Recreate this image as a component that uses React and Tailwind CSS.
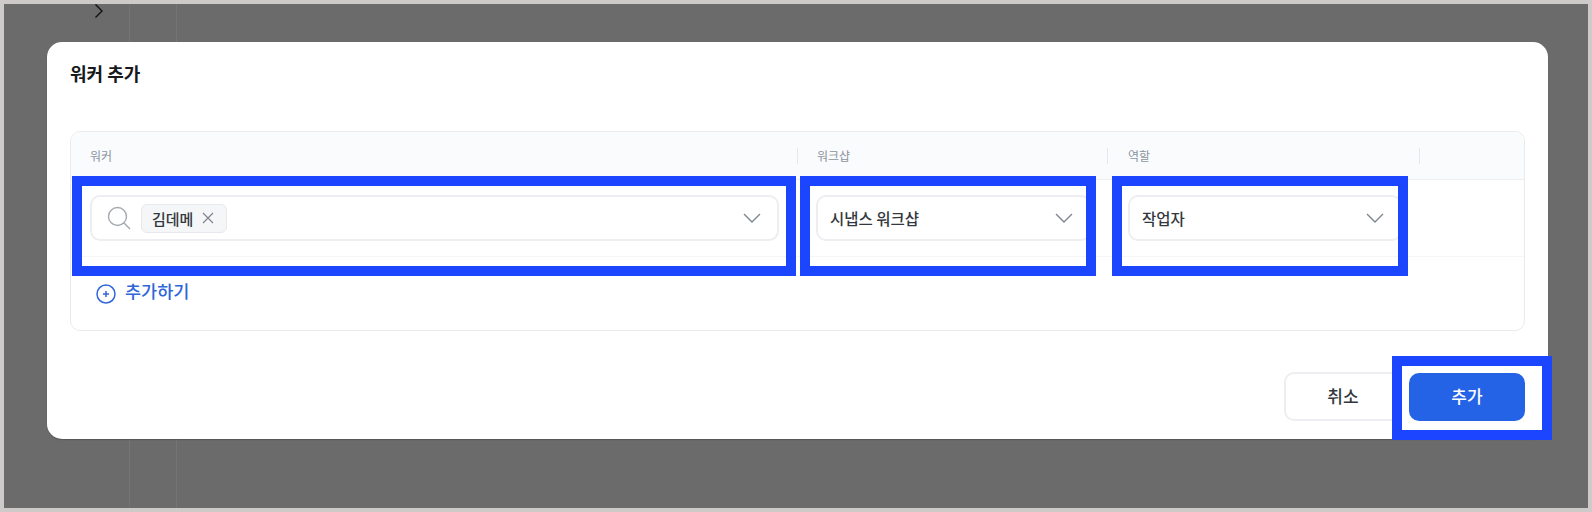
const font = { fontFamily: '"Noto Sans CJK KR", "Noto Sans", sans-serif' };

function Chevron() {
  return (
    <svg width="18" height="10" viewBox="0 0 18 10" fill="none" className="shrink-0">
      <path d="M1 1L9 9L17 1" stroke="#7e8791" strokeWidth="1.4" />
    </svg>
  );
}

function Highlight({ className }) {
  return <div className={`absolute border-[10px] border-[#1b45ff] pointer-events-none ${className}`} />;
}

function SelectBox({ label }) {
  return (
    <div className="h-[46px] flex items-center justify-between pl-3 pr-4 bg-white border-2 border-[#eceef1] rounded-[10px]">
      <span className="mt-[2px] text-[15.5px] font-medium text-[#33383e]">{label}</span>
      <Chevron />
    </div>
  );
}

function HeaderCell({ label, pad, divider = true }) {
  return (
    <div className="flex items-center">
      <div className={`h-4 w-full flex items-center text-xs text-[#8b949e] ${pad} ${divider ? 'border-r border-[#e6e9ec]' : ''}`}>
        {label}
      </div>
    </div>
  );
}

export default function App() {
  return (
    <div style={font} className="relative box-border w-[1592px] h-[512px] border-4 border-[#cfcaca] bg-[#6b6b6b] pt-[38px] pl-[43px] overflow-hidden">
      <div className="absolute top-0 bottom-0 left-[125px] w-px bg-[#747474]" />
      <div className="absolute top-0 bottom-0 left-[172px] w-px bg-[#747474]" />
      <svg width="10" height="16" viewBox="0 0 10 16" fill="none" className="absolute left-[90px] top-[-1px]">
        <path d="M1.5 1.5L8 8L1.5 14.5" stroke="#111111" strokeWidth="1.4" />
      </svg>

      <div className="relative w-[1501px] h-[397px] bg-white rounded-[15px] pt-[19px] px-[23px] shadow-[0_1px_1px_rgba(0,0,0,0.2)]">
        <h2 className="text-lg leading-6 font-semibold text-[#17191c]">워커 추가</h2>

        <div className="mt-[46px] h-[200px] border border-[#e9ecef] rounded-[10px]">
          <div className="h-[48px] grid grid-cols-[727px_310px_312px_1fr] bg-[#f9fbfd] border-b border-[#eceef1] rounded-t-[10px]">
            <HeaderCell label="워커" pad="pl-[19px]" />
            <HeaderCell label="워크샵" pad="pl-[19px]" />
            <HeaderCell label="역할" pad="pl-5" />
            <HeaderCell label="" pad="" divider={false} />
          </div>

          <div className="h-[77px] grid grid-cols-[727px_310px_312px_1fr] border-b border-[#f5f6f7]">
            <div className="relative pt-[15px] pl-[19px] pr-[19px]">
              <div className="h-[46px] flex items-center pl-[15px] pr-4 border-2 border-[#eceef1] rounded-[10px] bg-white">
                <svg width="24" height="24" viewBox="0 0 24 24" fill="none" className="shrink-0">
                  <circle cx="10.5" cy="10.5" r="9" stroke="#a4a9af" strokeWidth="1.4" />
                  <path d="M17 17L23 23" stroke="#a4a9af" strokeWidth="1.4" />
                </svg>
                <div className="ml-[10px] h-[29px] w-[86px] flex items-center pl-[10px] gap-[9px] bg-[#f5f6f8] border border-[#e7e9ec] rounded-md">
                  <span className="mt-[2px] text-[15px] font-medium text-[#33383e]">김데메</span>
                  <svg width="12" height="12" viewBox="0 0 12 12" fill="none">
                    <path d="M1 1L11 11M11 1L1 11" stroke="#7e858d" strokeWidth="1.2" />
                  </svg>
                </div>
                <div className="flex-1" />
                <Chevron />
              </div>
              <Highlight className="left-px top-[-4px] w-[724px] h-[100px]" />
            </div>
            <div className="relative pt-[15px] pl-[18px] pr-[17px]">
              <SelectBox label="시냅스 워크샵" />
              <Highlight className="left-[2px] top-[-4px] w-[296px] h-[100px]" />
            </div>
            <div className="relative pt-[15px] pl-5 pr-[18px]">
              <SelectBox label="작업자" />
              <Highlight className="left-1 top-[-4px] w-[296px] h-[100px]" />
            </div>
            <div />
          </div>

          <div className="pl-[25px] pt-[22px] flex items-center gap-[9px]">
            <svg width="20" height="20" viewBox="0 0 20 20" fill="none" className="shrink-0">
              <circle cx="10" cy="10" r="9" stroke="#2f66d8" strokeWidth="1.5" />
              <path d="M10 7V13M7 10H13" stroke="#2f66d8" strokeWidth="1.5" />
            </svg>
            <span className="text-[17.5px] leading-6 mb-[5px] font-medium text-[#2f66d8]">추가하기</span>
          </div>
        </div>

        <div className="mt-[41px] flex justify-end gap-[7px]">
          <button className="w-[118px] h-[49px] pb-[2px] bg-white border-2 border-[#eceef1] rounded-[10px] text-[17px] font-medium text-[#33383e]">
            취소
          </button>
          <div className="relative">
            <button className="w-[116px] h-[48px] pb-[2px] mt-px bg-[#2563e6] rounded-[10px] text-[17px] font-medium text-white">
              추가
            </button>
            <Highlight className="left-[-17px] top-[-16px] w-[160px] h-[84px]" />
          </div>
        </div>
      </div>
    </div>
  );
}
